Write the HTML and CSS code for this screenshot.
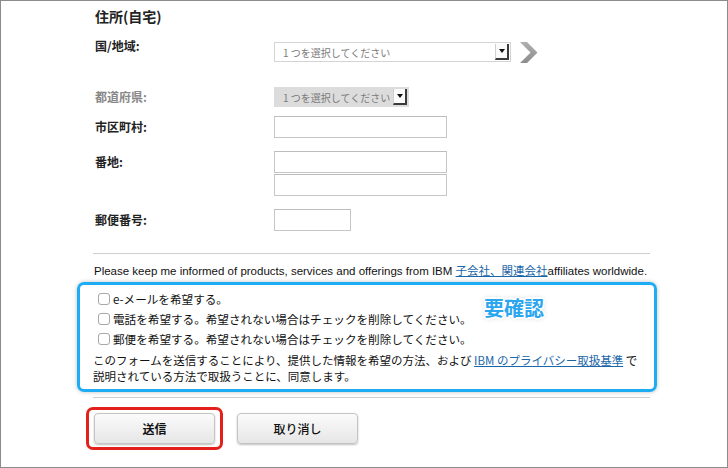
FILE: index.html
```html
<!DOCTYPE html>
<html lang="ja">
<head>
    <meta charset="UTF-8">
    <meta name="viewport" content="width=device-width, initial-scale=1.0">
    <title>住所(自宅)</title>
    <link rel="stylesheet" href="styles.css">
</head>
<body>
    <div class="frame">
        <div class="content">
            <h2 class="heading">住所(自宅)</h2>

            <div class="row row-country">
                <div class="label">国/地域:</div>
                <div class="field">
                    <div class="select select-wide">
                        <span class="select-text">1 つを選択してください</span>
                        <span class="select-btn"></span>
                    </div>
                    <svg class="next" width="18" height="21" viewBox="0 0 18 21">
                        <defs>
                            <linearGradient id="chev" x1="0" y1="0" x2="0" y2="1">
                                <stop offset="0" stop-color="#b0b0b0"/>
                                <stop offset="1" stop-color="#8c8c8c"/>
                            </linearGradient>
                        </defs>
                        <polygon points="0,0 7,0 17.5,10.5 7,21 0,21 10.5,10.5" fill="url(#chev)"/>
                    </svg>
                </div>
            </div>

            <div class="row row-pref">
                <div class="label label-off">都道府県:</div>
                <div class="field">
                    <div class="select select-off">
                        <span class="select-text">1 つを選択してください</span>
                        <span class="select-btn"></span>
                    </div>
                </div>
            </div>

            <div class="row row-city">
                <div class="label label-input">市区町村:</div>
                <div class="field">
                    <input class="text-input" type="text">
                </div>
            </div>

            <div class="row row-street">
                <div class="label label-input">番地:</div>
                <div class="field field-stack">
                    <input class="text-input" type="text">
                    <input class="text-input" type="text">
                </div>
            </div>

            <div class="row row-zip">
                <div class="label label-input">郵便番号:</div>
                <div class="field">
                    <input class="text-input text-short" type="text">
                </div>
            </div>

            <hr class="rule rule-top">

            <p class="keep">Please keep me informed of products, services and offerings from IBM <a href="#">子会社、関連会社</a>affiliates worldwide.</p>

            <div class="consent">
                <label class="check"><input type="checkbox">e-メールを希望する。</label>
                <label class="check"><input type="checkbox">電話を希望する。希望されない場合はチェックを削除してください。</label>
                <label class="check"><input type="checkbox">郵便を希望する。希望されない場合はチェックを削除してください。</label>
                <p class="agree">このフォームを送信することにより、提供した情報を希望の方法、および <a href="#">IBM のプライバシー取扱基準</a> で<br>説明されている方法で取扱うことに、同意します。</p>
                <span class="badge">要確認</span>
            </div>

            <hr class="rule rule-bottom">

            <div class="actions">
                <div class="mark">
                    <button class="btn btn-submit">送信</button>
                </div>
                <button class="btn btn-cancel">取り消し</button>
            </div>
        </div>
    </div>
</body>
</html>
```

FILE: styles.css
```css
body {
    margin: 0;
    background: #ffffff;
    font-family: "Liberation Sans", "Noto Sans CJK JP", sans-serif;
    color: #222;
}

.frame {
    box-sizing: border-box;
    width: 728px;
    height: 468px;
    border: 1px solid #8c8c8c;
    background: #fff;
    overflow: hidden;
}

.content {
    margin-left: 92px;
    width: 558px;
}

.heading {
    margin: 5px 0 0 2px;
    font-size: 14px;
    line-height: 20px;
    font-weight: bold;
    font-family: "Noto Sans CJK JP", sans-serif;
}

/* form rows */
.row {
    display: flex;
    align-items: flex-start;
}

.label {
    width: 179px;
    padding-left: 2px;
    font-size: 12px;
    line-height: 16px;
    font-weight: bold;
    font-family: "Noto Sans CJK JP", sans-serif;
    color: #222;
}

.label-off {
    color: #888;
    padding-top: 2px;
}

.label-input {
    padding-top: 3px;
}

.row-country { margin-top: 12px; }
.row-pref { margin-top: 24px; }
.row-city { margin-top: 9px; }
.row-street { margin-top: 13px; }
.row-zip { margin-top: 13px; }

.field {
    display: flex;
    align-items: flex-start;
}

.row-country .field {
    margin-top: 4px;
}

.field-stack {
    flex-direction: column;
    gap: 1px;
}

.select {
    box-sizing: border-box;
    height: 20px;
    display: flex;
    align-items: center;
    justify-content: space-between;
    border: 1px solid #d4d4d4;
    background: #fff;
    padding: 0 1px 0 8px;
}

.select-wide { width: 237px; }

.select-off {
    width: 135px;
    background: #dcdcdc;
    border-color: #dcdcdc;
}

.select-text {
    font-size: 10px;
    color: #7a7a7a;
    font-family: "Noto Sans CJK JP", sans-serif;
    white-space: nowrap;
}

.select-btn {
    position: relative;
    flex-shrink: 0;
    box-sizing: border-box;
    width: 14px;
    height: 16px;
    background: #fafafa;
    border-left: 1px solid #d0d0d0;
    border-right: 2px solid #3a3a3a;
    border-bottom: 2px solid #3a3a3a;
}

.select-btn::after {
    content: "";
    position: absolute;
    left: 3px;
    top: 5px;
    border-left: 3.5px solid transparent;
    border-right: 3.5px solid transparent;
    border-top: 4px solid #111;
}

.next {
    margin-left: 9px;
}

.text-input {
    box-sizing: border-box;
    width: 173px;
    height: 22px;
    margin: 0;
    border: 1px solid #c6c6c6;
    border-top-color: #bdbdbd;
    background: #fff;
    padding: 0 4px;
}

.text-short { width: 77px; }

.rule {
    border: none;
    border-top: 1px solid #cfcfcf;
    margin: 0;
    width: 557px;
}

.rule-top { margin-top: 22px; }
.rule-bottom { margin-top: 5px; }

.keep {
    margin: 9px 0 0 1px;
    font-size: 11.5px;
    line-height: 16px;
    color: #111;
    white-space: nowrap;
}

a {
    color: #1a66a8;
    text-decoration: underline;
}

/* consent box */
.consent {
    position: relative;
    box-sizing: border-box;
    width: 580px;
    height: 110px;
    margin: 3px 0 0 -16px;
    border: 3px solid #1eacf4;
    border-radius: 7px;
    box-shadow: 0 0 4px rgba(0, 0, 0, 0.25);
    padding: 4px 0 0 13px;
}

.check {
    display: flex;
    align-items: center;
    height: 20px;
    font-size: 11.6px;
    color: #111;
    font-family: "Noto Sans CJK JP", sans-serif;
}

.check input {
    appearance: none;
    -webkit-appearance: none;
    box-sizing: border-box;
    width: 12px;
    height: 12px;
    margin: 0 3px 0 5px;
    border: 1px solid #a8a8a8;
    border-radius: 3px;
    background: #fff;
}

.agree {
    margin: 3px 0 0 0;
    font-size: 11.5px;
    line-height: 16px;
    color: #111;
    font-family: "Noto Sans CJK JP", sans-serif;
    white-space: nowrap;
}

.badge {
    position: absolute;
    left: 404px;
    top: 11px;
    font-size: 20px;
    line-height: 24px;
    font-weight: bold;
    font-family: "Noto Sans CJK JP", sans-serif;
    color: #2ba6ef;
    text-shadow:
        2px 0 0 #fff, -2px 0 0 #fff, 0 2px 0 #fff, 0 -2px 0 #fff,
        1px 1px 0 #fff, -1px -1px 0 #fff, 1px -1px 0 #fff, -1px 1px 0 #fff,
        0 0 5px rgba(0, 0, 0, 0.35);
}

/* buttons */
.actions {
    display: flex;
    align-items: center;
    margin-top: 9px;
}

.mark {
    box-sizing: border-box;
    margin-left: -7px;
    padding: 3px 5px;
    border: 3px solid #e3201b;
    border-radius: 7px;
}

.btn {
    box-sizing: border-box;
    width: 121px;
    height: 31px;
    border: 1px solid #c4c4c4;
    border-radius: 4px;
    background: linear-gradient(#fbfbfb, #e6e6e6);
    box-shadow: 0 1px 2px rgba(0, 0, 0, 0.25);
    font-family: "Noto Sans CJK JP", sans-serif;
    font-size: 12px;
    color: #111;
    cursor: pointer;
    display: block;
}

.btn-submit {
    font-weight: bold;
}

.btn-cancel {
    margin-left: 14px;
    font-weight: 500;
}
```
